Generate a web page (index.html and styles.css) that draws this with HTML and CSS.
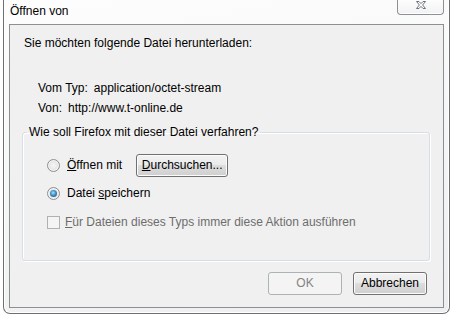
FILE: index.html
```html
<!DOCTYPE html>
<html lang="de">
<head>
<meta charset="utf-8">
<title>Öffnen von</title>
<link rel="stylesheet" href="styles.css">
</head>
<body>
<div class="window">
  <div class="titlebar">
    <span class="title">Öffnen von</span>
    <button class="close" aria-label="Schließen">
      <svg width="10" height="8" viewBox="0 0 10 8"><path d="M0.5 0.5H3L5 2.6L7 0.5H9.5L6.6 4L9.5 7.5H7L5 5.4L3 7.5H0.5L3.4 4Z" fill="#fff" stroke="#6f747a" stroke-width="1" stroke-linejoin="round"/></svg>
    </button>
  </div>
  <div class="client">
    <p class="intro">Sie möchten folgende Datei herunterladen:</p>
    <div class="info">
      <div class="row"><span>Vom Typ:</span><span>application/octet-stream</span></div>
      <div class="row"><span>Von:</span><span>http://www.t-online.de</span></div>
    </div>
    <fieldset class="group">
      <legend>Wie soll Firefox mit dieser Datei verfahren?</legend>
      <div class="opt">
        <span class="radio"></span><span class="label"><u>Ö</u>ffnen mit</span>
        <button class="btn browse"><u>D</u>urchsuchen...</button>
      </div>
      <div class="opt">
        <span class="radio checked"></span><span class="label">Datei <u>s</u>peichern</span>
      </div>
      <div class="opt disabled">
        <span class="check"></span><span class="label cb"><u>F</u>ür Dateien dieses Typs immer diese Aktion ausführen</span>
      </div>
    </fieldset>
    <div class="buttons">
      <button class="btn dialog off">OK</button>
      <button class="btn dialog">Abbrechen</button>
    </div>
  </div>
</div>
</body>
</html>
```

FILE: styles.css
```css
* { box-sizing: border-box; }

body {
  margin: 0;
  background: #ffffff;
  font-family: "Liberation Sans", Arial, sans-serif;
  font-size: 12px;
  line-height: 15px;
  color: #000;
}

.window {
  margin: 0 2px 0 3px;
  height: 314px;
  border: 1px solid #6f6f6f;
  border-top: none;
  border-radius: 0 0 7px 7px;
  background: linear-gradient(170deg, #fdfdfd 0%, #f6f7f8 45%, #eceef0 100%);
  box-shadow: inset 1px 0 0 #ffffff, inset -1px 0 0 #ffffff, inset 0 -1px 0 #ffffff;
  padding: 0 5px 5px 5px;
  display: flex;
  flex-direction: column;
}

.titlebar {
  height: 24px;
  display: flex;
  justify-content: space-between;
  align-items: flex-start;
}

.title {
  margin-top: 4px;
  padding-left: 1px;
}

.close {
  width: 47px;
  height: 15px;
  padding: 1px 0 0 0;
  border: 1px solid #8d9196;
  border-top: none;
  border-radius: 0 0 4px 4px;
  background: linear-gradient(#fdfdfd, #f1f2f4);
  box-shadow: inset 0 -1px 0 #ffffff;
  display: flex;
  justify-content: center;
  align-items: flex-start;
}

.close svg { display: block; }

.client {
  flex: 1;
  border: 1px solid #8e8f8f;
  background: #f0f0f0;
  display: flex;
  flex-direction: column;
}

.intro {
  margin: 0;
  padding: 11px 0 0 14px;
}

.info {
  margin-top: 30px;
  padding-left: 28px;
  display: flex;
  flex-direction: column;
  gap: 5px;
}

.row {
  display: flex;
  gap: 6px;
}

.group {
  margin: 9px 13px 0 12px;
  padding: 14px 0 26px 4px;
  border: 1px solid #d5dfe5;
  border-radius: 3px;
  box-shadow: inset 1px 1px 0 #ffffff, 1px 1px 0 #ffffff;
  min-width: 0;
}

.group legend {
  padding: 0 2px;
}

.opt {
  display: flex;
  align-items: center;
  height: 23px;
  margin-left: 20px;
}

.opt + .opt { margin-top: 5px; }
.opt.disabled { margin-top: 6px; color: #6d6d6d; }

.radio {
  position: relative;
  width: 13px;
  height: 13px;
  border-radius: 50%;
  border: 1px solid #8e8f8f;
  background: radial-gradient(circle at 50% 50%, #f6f6f6 0, #e6e6e6 55%, #cfcfcf 100%);
  box-shadow: inset 0 0 0 1px #f4f4f4;
  flex: none;
}

.radio.checked::after {
  content: "";
  position: absolute;
  left: 2px;
  top: 2px;
  width: 7px;
  height: 7px;
  border-radius: 50%;
  background: radial-gradient(circle at 45% 40%, #a9e2fb 0, #3f8fc4 45%, #15497a 100%);
}

.check {
  width: 13px;
  height: 13px;
  border: 1px solid #b1b1b1;
  background: #f4f4f4;
  flex: none;
}

.label { margin-left: 7px; }
.label.cb { margin-left: 5px; }

.btn {
  height: 23px;
  padding: 0;
  border: 1px solid #707070;
  border-radius: 3px;
  background: linear-gradient(#f2f2f2 0%, #ebebeb 50%, #dddddd 50%, #cfcfcf 100%);
  box-shadow: inset 0 0 0 1px #fcfcfc;
  font: inherit;
  color: #000;
}

.browse {
  width: 92px;
  margin-left: 14px;
}

.buttons {
  display: flex;
  justify-content: flex-end;
  gap: 11px;
  margin: 11px 16px 0 0;
}

.dialog { width: 74px; }

.btn.off {
  border-color: #adb2b5;
  background: #f4f4f4;
  box-shadow: none;
  color: #838383;
}
```
